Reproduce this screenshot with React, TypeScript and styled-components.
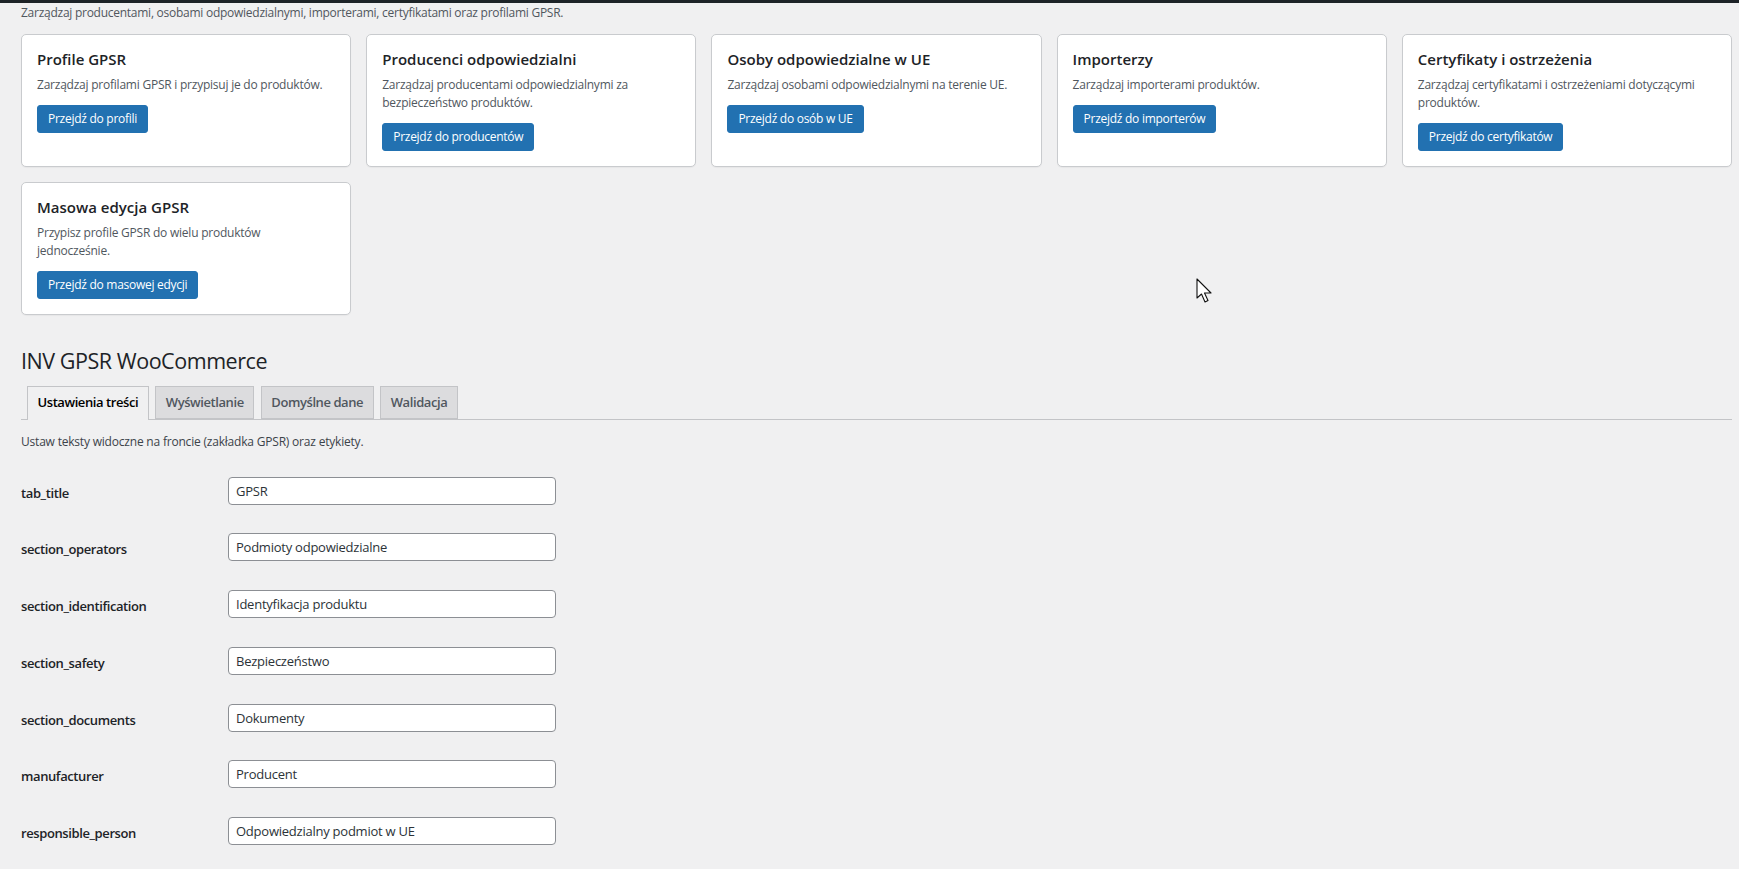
import { createGlobalStyle } from "styled-components"
import styled from "styled-components"

const cards = [
    { title: "Profile GPSR", text: "Zarządzaj profilami GPSR i przypisuj je do produktów.", action: "Przejdź do profili" },
    { title: "Producenci odpowiedzialni", text: "Zarządzaj producentami odpowiedzialnymi za bezpieczeństwo produktów.", action: "Przejdź do producentów" },
    { title: "Osoby odpowiedzialne w UE", text: "Zarządzaj osobami odpowiedzialnymi na terenie UE.", action: "Przejdź do osób w UE" },
    { title: "Importerzy", text: "Zarządzaj importerami produktów.", action: "Przejdź do importerów" },
    { title: "Certyfikaty i ostrzeżenia", text: "Zarządzaj certyfikatami i ostrzeżeniami dotyczącymi produktów.", action: "Przejdź do certyfikatów" },
    { title: "Masowa edycja GPSR", text: "Przypisz profile GPSR do wielu produktów jednocześnie.", action: "Przejdź do masowej edycji" },
]

const tabs = ["Ustawienia treści", "Wyświetlanie", "Domyślne dane", "Walidacja"]

const fields = [
    { name: "tab_title", value: "GPSR" },
    { name: "section_operators", value: "Podmioty odpowiedzialne" },
    { name: "section_identification", value: "Identyfikacja produktu" },
    { name: "section_safety", value: "Bezpieczeństwo" },
    { name: "section_documents", value: "Dokumenty" },
    { name: "manufacturer", value: "Producent" },
    { name: "responsible_person", value: "Odpowiedzialny podmiot w UE" },
]

const App = () => {
    return (
        <Page>
            <GlobalStyle />
            <TopBar />
            <Wrap>
                <Lead>Zarządzaj producentami, osobami odpowiedzialnymi, importerami, certyfikatami oraz profilami GPSR.</Lead>
                <CardGrid>
                    {cards.map((card) => (
                        <Card key={card.title}>
                            <CardTitle>{card.title}</CardTitle>
                            <CardText>{card.text}</CardText>
                            <CardButton href="#">{card.action}</CardButton>
                        </Card>
                    ))}
                </CardGrid>
                <Heading>INV GPSR WooCommerce</Heading>
                <TabBar>
                    {tabs.map((tab, i) => (
                        <Tab key={tab} href="#" $active={i === 0}>{tab}</Tab>
                    ))}
                </TabBar>
                <TabIntro>Ustaw teksty widoczne na froncie (zakładka GPSR) oraz etykiety.</TabIntro>
                <Form>
                    {fields.map((field) => (
                        <Row key={field.name}>
                            <Label htmlFor={field.name}>{field.name}</Label>
                            <Input id={field.name} type="text" defaultValue={field.value} />
                        </Row>
                    ))}
                </Form>
            </Wrap>
            <Pointer width="17" height="26" viewBox="0 0 17 26">
                <path d="M1 1 L1 20 L5.5 16 L9 24 L12 22.5 L8.5 15 L15 15 Z" fill="#fff" stroke="#111" strokeWidth="1.1" strokeLinejoin="round" />
            </Pointer>
        </Page>
    )
}

export default App

const GlobalStyle = createGlobalStyle`
html, body {
    margin: 0;
    padding: 0;
    background: #f0f0f1;
}
* {
    box-sizing: border-box;
}
`

const Page = styled.div`
position: relative;
height: 869px;
overflow: hidden;
background: #f0f0f1;
color: #3c434a;
font-family: "Open Sans", "Noto Sans", sans-serif;
font-size: 13px;
`

const TopBar = styled.div`
height: 3px;
background: #1d2327;
`

const Wrap = styled.div`
padding: 0 7px 0 21px;
`

const Lead = styled.p`
margin: 0;
height: 31px;
padding-top: 1px;
line-height: 18px;
font-size: 12px;
letter-spacing: -0.26px;
color: #50575e;
`

const CardGrid = styled.div`
display: grid;
grid-template-columns: repeat(5, 1fr);
grid-auto-rows: 133px;
gap: 15px;
`

const Card = styled.div`
background: #fff;
border: 1px solid #c9cbce;
border-radius: 5px;
padding: 14px 15px;
box-shadow: 0 1px 1px rgba(0, 0, 0, 0.04);
`

const CardTitle = styled.h3`
margin: 0 0 7px;
font-size: 15px;
line-height: 20px;
font-weight: 600;
color: #1d2327;
`

const CardText = styled.p`
margin: 0 0 11px;
font-size: 12px;
line-height: 18px;
letter-spacing: -0.23px;
color: #50575e;
`

const CardButton = styled.a`
display: inline-block;
height: 28px;
line-height: 26px;
padding: 0 10px;
background: #2271b1;
border: 1px solid #2271b1;
border-radius: 3px;
color: #fff;
font-size: 12px;
letter-spacing: -0.27px;
text-decoration: none;
`

const Heading = styled.h1`
margin: 31px 0 0;
font-size: 21.5px;
line-height: 30px;
letter-spacing: -0.45px;
font-weight: 400;
color: #1d2327;
`

const TabBar = styled.div`
display: flex;
gap: 6.6px;
height: 34px;
margin-top: 10px;
padding-left: 6px;
border-bottom: 1px solid #c3c4c7;
`

const Tab = styled.a<{
    $active: boolean;
}>`
display: block;
height: ${({ $active }) => ($active ? "34px" : "33px")};
padding: 0 9.5px;
line-height: 30px;
font-size: 13px;
letter-spacing: -0.42px;
font-weight: 600;
text-decoration: none;
border: 1px solid #c3c4c7;
border-bottom: ${({ $active }) => ($active ? "none" : "1px solid #c3c4c7")};
background: ${({ $active }) => ($active ? "#f0f0f1" : "#dcdcde")};
color: ${({ $active }) => ($active ? "#000" : "#50575e")};
`

const TabIntro = styled.p`
margin: 13px 0 0;
line-height: 18px;
font-size: 12px;
letter-spacing: -0.2px;
color: #3c434a;
`

const Form = styled.div`
display: flex;
flex-direction: column;
gap: 28.75px;
margin-top: 25.7px;
`

const Row = styled.div`
display: flex;
align-items: center;
height: 28px;
`

const Label = styled.label`
width: 207px;
padding-top: 4px;
font-size: 13px;
letter-spacing: -0.4px;
font-weight: 600;
color: #1d2327;
`

const Input = styled.input`
width: 328px;
height: 28px;
padding: 0 7px;
background: #fff;
border: 1px solid #8c8f94;
border-radius: 4px;
font-family: inherit;
font-size: 13px;
letter-spacing: -0.24px;
color: #2c3338;
`

const Pointer = styled.svg`
position: absolute;
left: 1196px;
top: 278px;
`
